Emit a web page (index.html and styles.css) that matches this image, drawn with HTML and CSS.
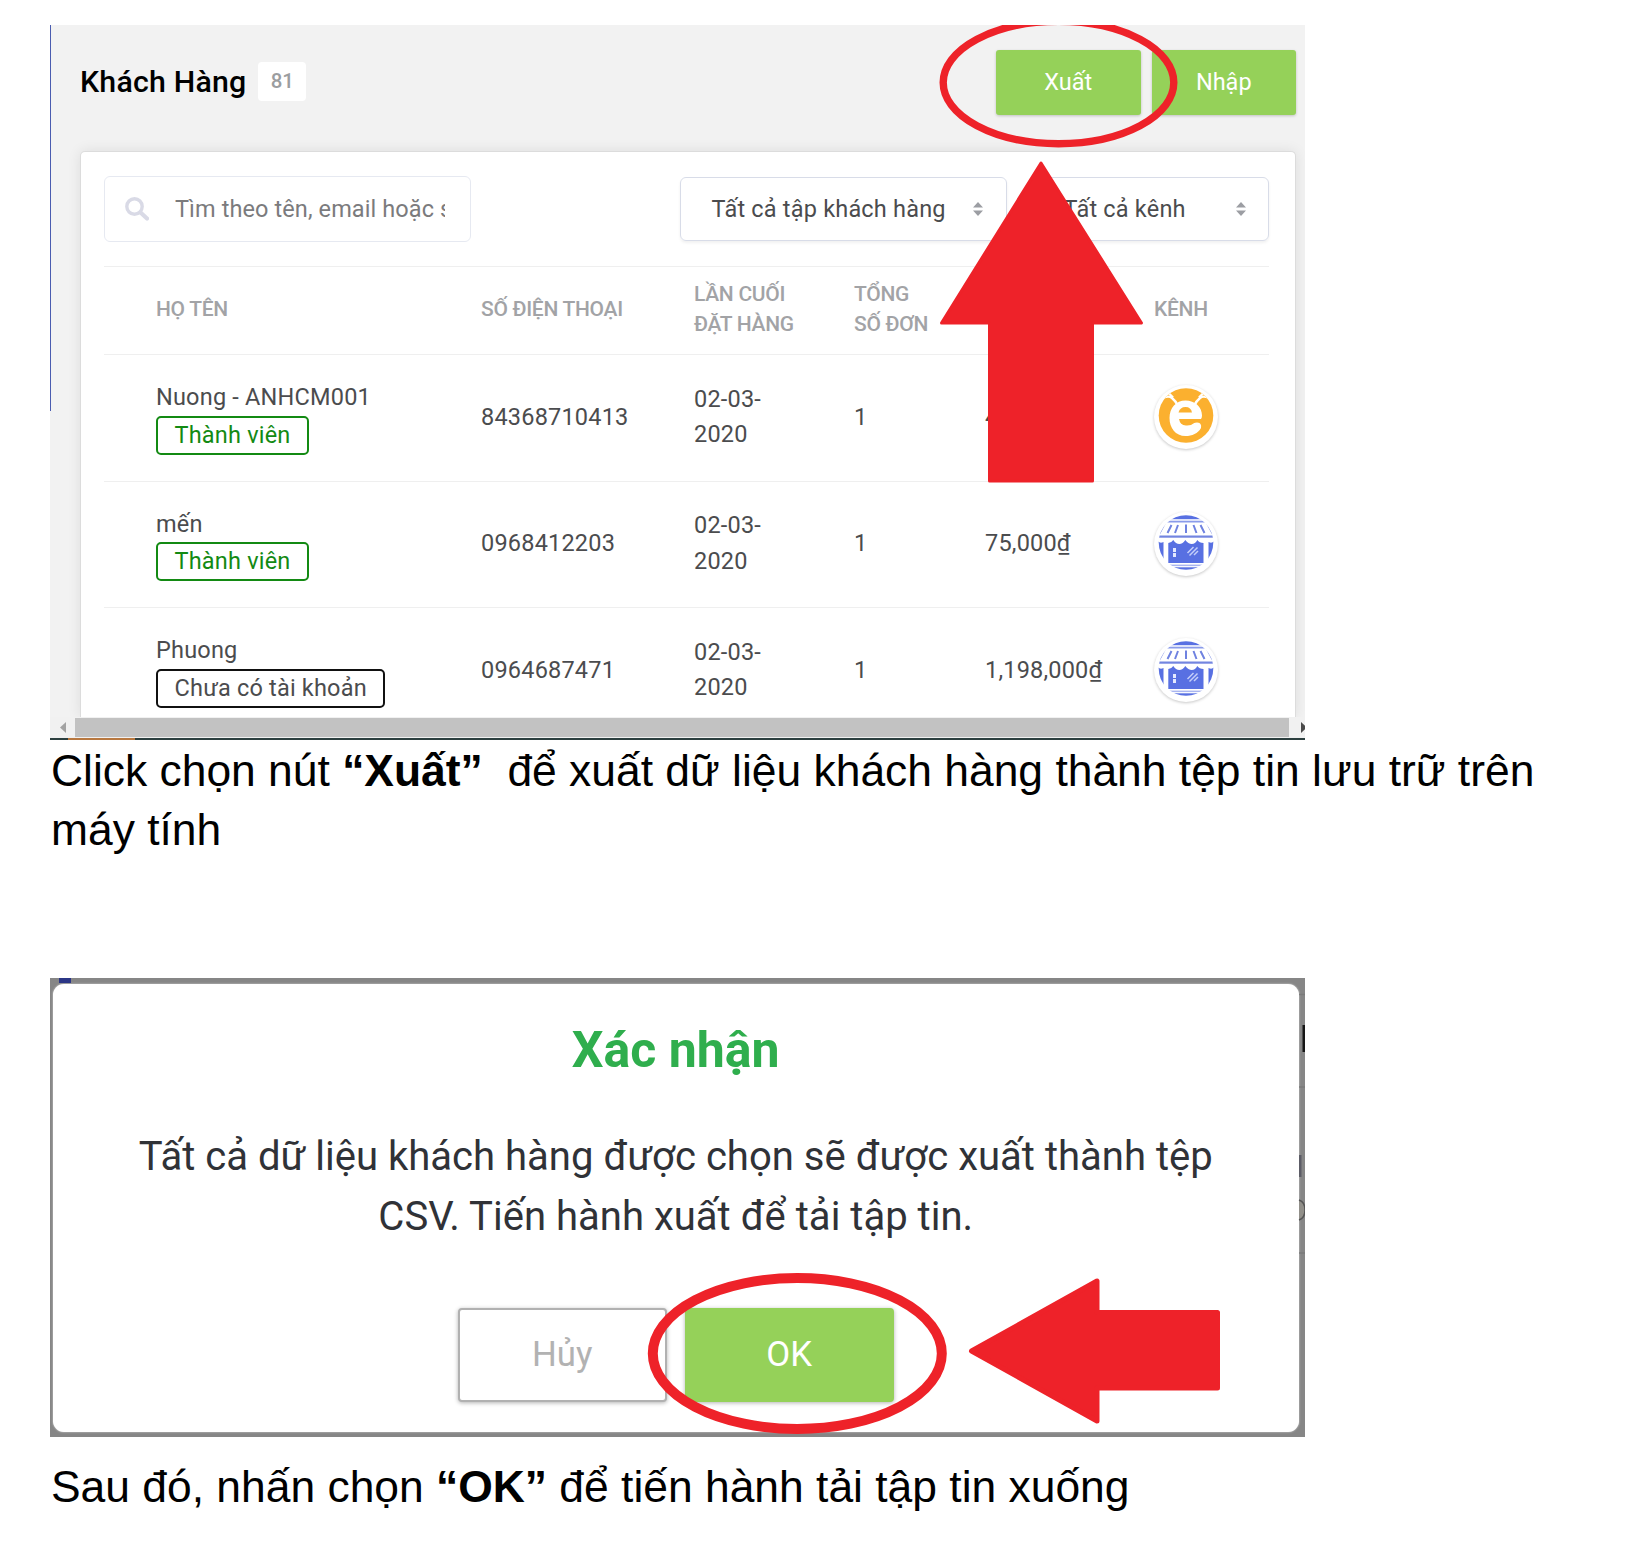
FILE: index.html
```html
<!DOCTYPE html>
<html lang="vi">
<head>
<meta charset="utf-8">
<title>Xuất dữ liệu khách hàng</title>
<link rel="stylesheet" href="styles.css">
</head>
<body>
<svg class="defs" aria-hidden="true">
  <defs>
    <clipPath id="disc"><circle cx="32" cy="30.500" r="27.300"/></clipPath>
    <symbol id="store" viewBox="0 0 64 64">
      <g clip-path="url(#disc)">
        <rect width="64" height="64" fill="#fff"/>
        <rect width="64" height="7.200" fill="#5870e2"/>
        <rect y="8.700" width="64" height="1.800" fill="#8a9bea"/>
        <path d="M17.500 13l-4 8M24 13l-3 8M32 12.500v8.500M39.500 13l3 8M46.500 13l4 8" stroke="#6f82e0" stroke-width="2" fill="none"/>
        <path d="M12 9L4 24M52 9l8 15" stroke="#7385e0" stroke-width="2" fill="none"/>
        <rect y="23.500" width="64" height="2.200" fill="#7385e0"/>
        <path d="M4 29q2 3 5.500 1V52H4zM60 29q-2 3-5.500 1V52H60z" fill="#5870e2"/>
        <path d="M14.300 51V31q3 0 5-3 2.500 4 6 4t6-4q3 4 6.500 4t5.500-4q2 3 6.200 3v20z" fill="#5870e2"/>
        <rect x="9" y="52.600" width="46" height="1.500" fill="#a9b5f0"/>
        <rect y="55.300" width="64" height="10" fill="#5870e2"/>
        <path d="M20.500 36v9" stroke="#e4e9ff" stroke-width="3" stroke-dasharray="4 1"/>
        <path d="M33.500 41l6-6M35.500 43.500l8-8M40 43l4-4" stroke="#c4cefa" stroke-width="1.500"/>
      </g>
    </symbol>
    <symbol id="bee" viewBox="0 0 64 64">
      <g clip-path="url(#disc)">
        <rect width="64" height="64" fill="#fbb02f"/>
        <path d="M5 15Q14 9.500 18 13T23.500 20M59 15Q50 9.500 46 13T40.500 20" stroke="#fff" stroke-width="2.400" fill="none"/>
        <path d="M13.500 7L19 12.500M50.500 7L45 12.500" stroke="#fff" stroke-width="2.400"/>
        <path d="M31.500 15.500C41 15.500 48 22 48 30.500Q48 35 44 35L26 35C27 40 32 41.500 38 38.500L43 37Q48 38 47 43C44 48.500 38 51 31.500 51C21.500 51 15.500 43 15.500 33C15.500 23 22 15.500 31.500 15.500z" fill="#fff"/>
        <path d="M24.500 27.500Q26 22 31.500 22T38 27.500z" fill="#fbb02f"/>
        <path d="M25 34H48V37.500H41Q37 41 32 40.500Q26 40 25 34z" fill="#fbb02f"/>
      </g>
    </symbol>
  </defs>
</svg>

<main class="doc">
  <figure class="shot customers">
    <header class="bar">
      <h1 class="title">Khách Hàng</h1>
      <span class="count">81</span>
      <div class="actions">
        <button class="btn">Xuất</button>
        <button class="btn">Nhập</button>
      </div>
    </header>
    <section class="card">
      <div class="filters">
        <div class="search">
          <svg class="lens" viewBox="0 0 24 24"><circle cx="9.500" cy="9.500" r="7.700" fill="none" stroke="#d9dae6" stroke-width="3.400"/><path d="M15.500 15.500l6.500 6" stroke="#d9dae6" stroke-width="4.200" stroke-linecap="round"/></svg>
          <span class="placeholder">Tìm theo tên, email hoặc số</span>
        </div>
        <div class="select select-group"><span>Tất cả tập khách hàng</span><svg class="caret" viewBox="0 0 10 14"><path d="M5 0l5 5.500H0zM5 14l5-5.500H0z" fill="#9c9ea3"/></svg></div>
        <div class="select select-channel"><span>Tất cả kênh</span><svg class="caret" viewBox="0 0 10 14"><path d="M5 0l5 5.500H0zM5 14l5-5.500H0z" fill="#9c9ea3"/></svg></div>
      </div>
      <div class="row head">
        <span>HỌ TÊN</span><span>SỐ ĐIỆN THOẠI</span><span>LẦN CUỐI<br>ĐẶT HÀNG</span><span>TỔNG<br>SỐ ĐƠN</span><span></span><span>KÊNH</span>
      </div>
      <div class="row">
        <div>Nuong - ANHCM001<span class="tag">Thành viên</span></div><span>84368710413</span><span>02-03-<br>2020</span><span>1</span><span>4</span>
        <svg class="channel"><use href="#bee"/></svg>
      </div>
      <div class="row">
        <div>mến<span class="tag">Thành viên</span></div><span>0968412203</span><span>02-03-<br>2020</span><span>1</span><span>75,000₫</span>
        <svg class="channel"><use href="#store"/></svg>
      </div>
      <div class="row">
        <div>Phuong<span class="tag tag-none">Chưa có tài khoản</span></div><span>0964687471</span><span>02-03-<br>2020</span><span>1</span><span>1,198,000₫</span>
        <svg class="channel"><use href="#store"/></svg>
      </div>
    </section>
    <div class="scroll">
      <svg class="scroll-arrow" viewBox="0 0 25 20"><path d="M16 4v11l-6-5.500z" fill="#a3a3a3"/></svg>
      <div class="thumb"></div>
      <svg class="scroll-arrow scroll-end" viewBox="0 0 16 20"><path d="M12 4v11l6-5.500z" fill="#4a4a4a"/></svg>
    </div>
    <div class="taskbar"><i></i></div>
    <svg class="marks" viewBox="0 0 1255 715">
      <ellipse cx="1008.500" cy="57.500" rx="115.300" ry="61.200" fill="none" stroke="#ee2229" stroke-width="7.400"/>
      <path d="M991 138L1091.500 298H1042.500V456H939.500V298H891.500z" fill="#ee2229" stroke="#ee2229" stroke-width="3" stroke-linejoin="round"/>
    </svg>
  </figure>

  <p class="step">Click chọn nút <b>“Xuất”</b>&nbsp; để xuất dữ liệu khách hàng thành tệp tin lưu trữ trên<br>máy tính</p>

  <figure class="shot confirm">
    <div class="dialog">
      <h2 class="dialog-title">Xác nhận</h2>
      <p class="dialog-text">Tất cả dữ liệu khách hàng được chọn sẽ được xuất thành tệp<br>CSV. Tiến hành xuất để tải tập tin.</p>
      <div class="dialog-actions">
        <button class="big cancel">Hủy</button>
        <button class="big ok">OK</button>
      </div>
    </div>
    <svg class="marks" viewBox="0 0 1255 458.500">
      <rect x="9" y="0" width="12" height="5" fill="#2b3686"/>
      <path d="M1249 16.500h6M1249 109h6M1249 275h6" stroke="#7b7b7b" stroke-width="1.500"/>
      <rect x="1252.500" y="47" width="2.500" height="27" fill="#161616"/>
      <rect x="1249" y="177" width="2.500" height="22" fill="#5c5c66"/>
      <path d="M1249 222q6 2 6 10t-6 10" stroke="#555" stroke-width="1.500" fill="#918f89"/>
      <ellipse cx="747.300" cy="375.500" rx="144.500" ry="75.500" fill="none" stroke="#ee2229" stroke-width="10"/>
      <path d="M921.500 373L1047 303V334.500H1167.500V410H1047V443z" fill="#ee2229" stroke="#ee2229" stroke-width="5" stroke-linejoin="round"/>
    </svg>
  </figure>

  <p class="step last">Sau đó, nhấn chọn <b>“OK”</b> để tiến hành tải tập tin xuống</p>
</main>
</body>
</html>
```
FILE: styles.css
```css
* { box-sizing: border-box; }
body { margin: 0; background: #fff; color: #000; font-family: Roboto, sans-serif; }
h1, h2, p, figure { margin: 0; }
button { border: 0; padding: 0; font-family: inherit; }
.defs { position: absolute; width: 0; height: 0; }

.doc { width: 1651px; height: 1564px; padding: 25px 50px 0; overflow: hidden; }
.shot { position: relative; width: 1255px; overflow: hidden; }
.marks { position: absolute; inset: 0; width: 100%; height: 100%; }

.customers { height: 715px; background: linear-gradient(#4a5cb0, #4a5cb0) 0 0 / 1px 386px no-repeat, #f2f2f2; display: flex; flex-direction: column; }
.bar { display: flex; align-items: center; flex: none; height: 114px; padding: 0 9px 0 30px; }
.title { font-size: 30.300px; font-weight: 500; line-height: 40px; letter-spacing: 0.2px; }
.count { margin: 0 0 1px 12px; width: 48px; height: 39px; border-radius: 4px; background: #fff; color: #9b9da0; font-size: 20.500px; font-weight: 500; line-height: 38px; text-align: center; }
.actions { display: flex; gap: 11px; margin-left: auto; }
.btn { width: 144.500px; height: 65px; border-radius: 3px; background: #95d159; box-shadow: 0 1px 3px rgba(0, 0, 0, .2); color: #fff; font-size: 23.500px; }

.card { flex: 1; min-height: 0; overflow: hidden; margin: 12px 9.500px 0 30px; padding: 24px 26px 0 23px; border: 1px solid #dcdcdc; border-bottom: 0; border-radius: 5px 5px 0 0; background: #fff; box-shadow: 0 0 14px rgba(0, 0, 0, .09); color: #4b4c4e; font-size: 23.500px; letter-spacing: .2px; }
.filters { display: flex; align-items: center; height: 66px; margin-bottom: 24px; }
.search { display: flex; align-items: center; width: 367px; height: 66px; padding: 0 25px 0 20px; border: 1px solid #e6e9f1; border-radius: 6px; color: #7b7b7d; }
.lens { flex: none; width: 24px; height: 24px; margin-right: 26px; }
.placeholder { overflow: hidden; white-space: nowrap; line-height: 36px; letter-spacing: .1px; }
.select { display: flex; align-items: center; justify-content: space-between; height: 64px; padding: 0 22px 0 31px; border: 1.500px solid #d8dce8; border-radius: 6px; box-shadow: 0 2px 3px rgba(0, 0, 0, .06); white-space: nowrap; }
.select-group { width: 327px; margin-left: auto; padding-right: 23px; }
.select-channel { width: 233px; margin-left: 29px; padding-left: 27px; }
.caret { width: 10px; height: 14px; }

.row { display: grid; grid-template-columns: 325px 213px 160px 131px 169px 1fr; align-items: center; height: 126.500px; padding: 0 0 1px 52px; border-top: 1px solid #efefef; line-height: 35.500px; white-space: nowrap; }
.head { height: 88px; padding-bottom: 3px; color: #a2a3a6; font-size: 21px; font-weight: 500; line-height: 30px; letter-spacing: -.3px; }
.tag { display: block; width: max-content; height: 39px; padding: 0 16.500px; border: 2px solid #138a13; border-radius: 5px; color: #138a13; line-height: 35px; }
.tag-none { border-color: #111; color: #4b4c4e; }
.channel { width: 64px; height: 64px; border-radius: 50%; background: #fff; box-shadow: 0 1px 3px rgba(0, 0, 0, .22); }

.scroll { position: relative; display: flex; flex: none; height: 21px; padding: 1px 0; background: #f1f1f1; }
.scroll-arrow { flex: none; width: 25px; height: 20px; }
.thumb { width: 1214px; background: #c2c2c2; }
.scroll-end { width: 16px; }
.taskbar { flex: none; height: 2px; background: #2c3f3f; }
.taskbar i { display: block; width: 67px; height: 2px; margin-left: 18px; background: #b87840; }

.step { height: 238px; padding: 1px 0 0 1px; font: 44.400px/59.300px "Liberation Sans", Arial, sans-serif; white-space: nowrap; }
.last { height: auto; padding-top: 20px; }

.confirm { height: 458.500px; padding: 5.500px 6.500px 5.500px 3px; background: #868686; }
.dialog { height: 448px; border-radius: 11px; background: #fff; padding-top: 36px; text-align: center; box-shadow: 0 0 2px #ddd; }
.dialog-title { color: #2fae4d; font-size: 50px; font-weight: 700; line-height: 60px; }
.dialog-text { margin-top: 47px; color: #303237; font-size: 40.050px; line-height: 60.500px; white-space: nowrap; }
.dialog-actions { display: flex; justify-content: center; gap: 18px; margin-top: 60px; }
.big { width: 209px; height: 94px; padding-bottom: 2px; border-radius: 4px; font-size: 34.800px; box-shadow: 0 1px 4px rgba(0, 0, 0, .3); }
.cancel { border: 2px solid #b1b1b1; background: #fff; color: #b2b2b2; }
.ok { background: #95d159; color: #fff; }
```
